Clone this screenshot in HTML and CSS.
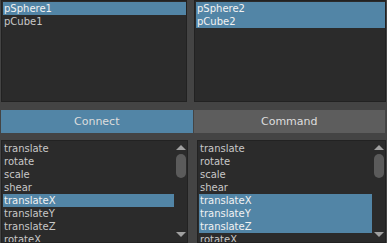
FILE: index.html
```html
<!DOCTYPE html>
<html>
<head>
<meta charset="utf-8">
<link rel="stylesheet" href="styles.css">
</head>
<body>
<div class="app">
  <div class="row top">
    <div class="list left">
      <div class="items">
        <div class="item sel">pSphere1</div>
        <div class="item">pCube1</div>
      </div>
    </div>
    <div class="list right">
      <div class="items">
        <div class="item sel">pSphere2</div>
        <div class="item sel">pCube2</div>
      </div>
    </div>
  </div>
  <div class="row buttons">
    <div class="btn primary">Connect</div>
    <div class="btn">Command</div>
  </div>
  <div class="row bottom">
    <div class="list left">
      <div class="items">
        <div class="item">translate</div>
        <div class="item">rotate</div>
        <div class="item">scale</div>
        <div class="item">shear</div>
        <div class="item sel">translateX</div>
        <div class="item">translateY</div>
        <div class="item">translateZ</div>
        <div class="item">rotateX</div>
      </div>
      <div class="scroll">
        <div class="arrow up"></div>
        <div class="track"><div class="thumb"></div></div>
        <div class="arrow down"></div>
      </div>
    </div>
    <div class="list right">
      <div class="items">
        <div class="item">translate</div>
        <div class="item">rotate</div>
        <div class="item">scale</div>
        <div class="item">shear</div>
        <div class="item sel">translateX</div>
        <div class="item sel">translateY</div>
        <div class="item sel">translateZ</div>
        <div class="item">rotateX</div>
      </div>
      <div class="scroll">
        <div class="arrow up"></div>
        <div class="track"><div class="thumb"></div></div>
        <div class="arrow down"></div>
      </div>
    </div>
  </div>
</div>
</body>
</html>
```
FILE: styles.css
```css
html, body {
  margin: 0;
  padding: 0;
  background: #444444;
  width: 387px;
  height: 243px;
  overflow: hidden;
}
.app {
  font-family: "DejaVu Sans", sans-serif;
  font-size: 10px;
  color: #c8c8c8;
  display: flex;
  flex-direction: column;
  height: 243px;
}
.row {
  display: flex;
}
.top {
  height: 102px;
  padding-left: 1px;
  padding-right: 1px;
  gap: 7px;
}
.top .left { width: 186px; }
.top .right { flex: 1; }
.list {
  background: #2b2b2b;
  border: 1px solid #222222;
  box-sizing: border-box;
  display: flex;
  overflow: hidden;
}
.items {
  flex: 1;
  padding: 1px 0 0 1px;
  min-width: 0;
}
.item {
  height: 13px;
  line-height: 13px;
  padding-left: 1px;
  white-space: nowrap;
}
.item.sel {
  background: #5285a6;
  color: #f2f2f2;
}
.buttons {
  margin-top: 8px;
  height: 23px;
  padding-left: 1px;
  padding-right: 2px;
  gap: 1px;
}
.btn {
  flex: 1;
  background: #5d5d5d;
  color: #dddddd;
  display: flex;
  align-items: center;
  justify-content: center;
  font-size: 11px;
}
.btn.primary {
  background: #5285a6;
}
.bottom {
  margin-top: 7px;
  height: 103px;
  padding-left: 1px;
  padding-right: 1px;
  gap: 9px;
}
.bottom .left { width: 187px; }
.bottom .right { flex: 1; }
.scroll {
  width: 13px;
  display: flex;
  flex-direction: column;
  align-items: center;
}
.arrow {
  width: 0;
  height: 0;
  border-left: 5px solid transparent;
  border-right: 5px solid transparent;
}
.arrow.up {
  margin-top: 4px;
  border-bottom: 5px solid #a0a0a0;
}
.arrow.down {
  margin-bottom: 5px;
  border-top: 5px solid #a0a0a0;
}
.track {
  flex: 1;
  width: 10px;
  padding-top: 4px;
}
.thumb {
  height: 24px;
  background: #5b5b5b;
  border-radius: 5px;
}
```
